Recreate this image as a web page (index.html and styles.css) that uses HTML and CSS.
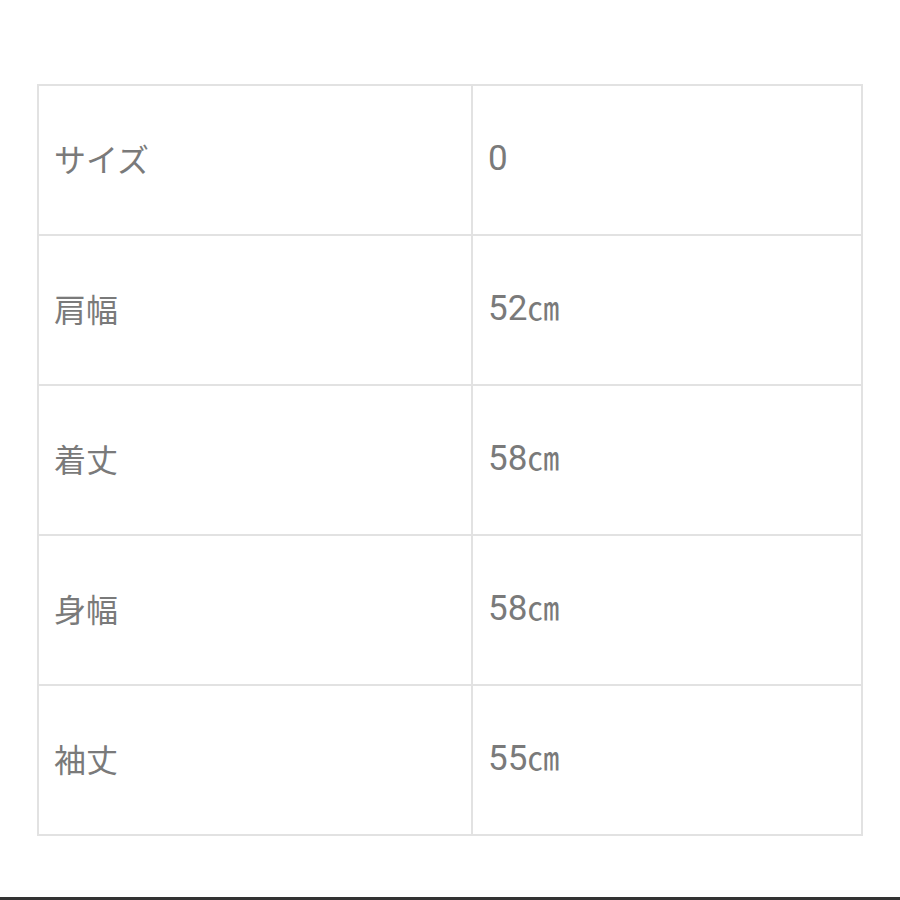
FILE: index.html
```html
<!DOCTYPE html>
<html lang="ja">
<head>
<meta charset="utf-8">
<link rel="stylesheet" href="styles.css">
</head>
<body>
<div class="page">
  <table class="size-table">
    <tr><td class="label">サイズ</td><td class="value"><span class="num">0</span></td></tr>
    <tr><td class="label">肩幅</td><td class="value"><span class="num">52</span>㎝</td></tr>
    <tr><td class="label">着丈</td><td class="value"><span class="num">58</span>㎝</td></tr>
    <tr><td class="label">身幅</td><td class="value"><span class="num">58</span>㎝</td></tr>
    <tr><td class="label">袖丈</td><td class="value"><span class="num">55</span>㎝</td></tr>
  </table>
  <div class="bottom-bar"></div>
</div>
</body>
</html>
```
FILE: styles.css
```css
html, body {
  margin: 0;
  padding: 0;
  background: #ffffff;
}
.page {
  width: 900px;
  height: 900px;
  box-sizing: border-box;
  padding-top: 84px;
  display: flex;
  flex-direction: column;
  align-items: center;
  position: relative;
  overflow: hidden;
}
.size-table {
  width: 826px;
  border-collapse: collapse;
  border: 2px solid #e2e2e2;
}
.size-table td {
  border: 2px solid #e2e2e2;
  height: 150px;
  padding: 0 0 4px 15px;
  vertical-align: middle;
  font-family: "Noto Sans CJK JP", "Noto Sans", sans-serif;
  font-size: 32px;
  color: #7a7a7a;
  line-height: 1;
  box-sizing: border-box;
}
.size-table td.label {
  width: 434px;
}
.size-table td.value {
  font-size: 32px;
}
.num {
  font-family: Roboto, "Liberation Sans", sans-serif;
  font-size: 35px;
}
.bottom-bar {
  position: absolute;
  left: 0;
  right: 0;
  bottom: 0;
  height: 3px;
  background: #333333;
}
```
